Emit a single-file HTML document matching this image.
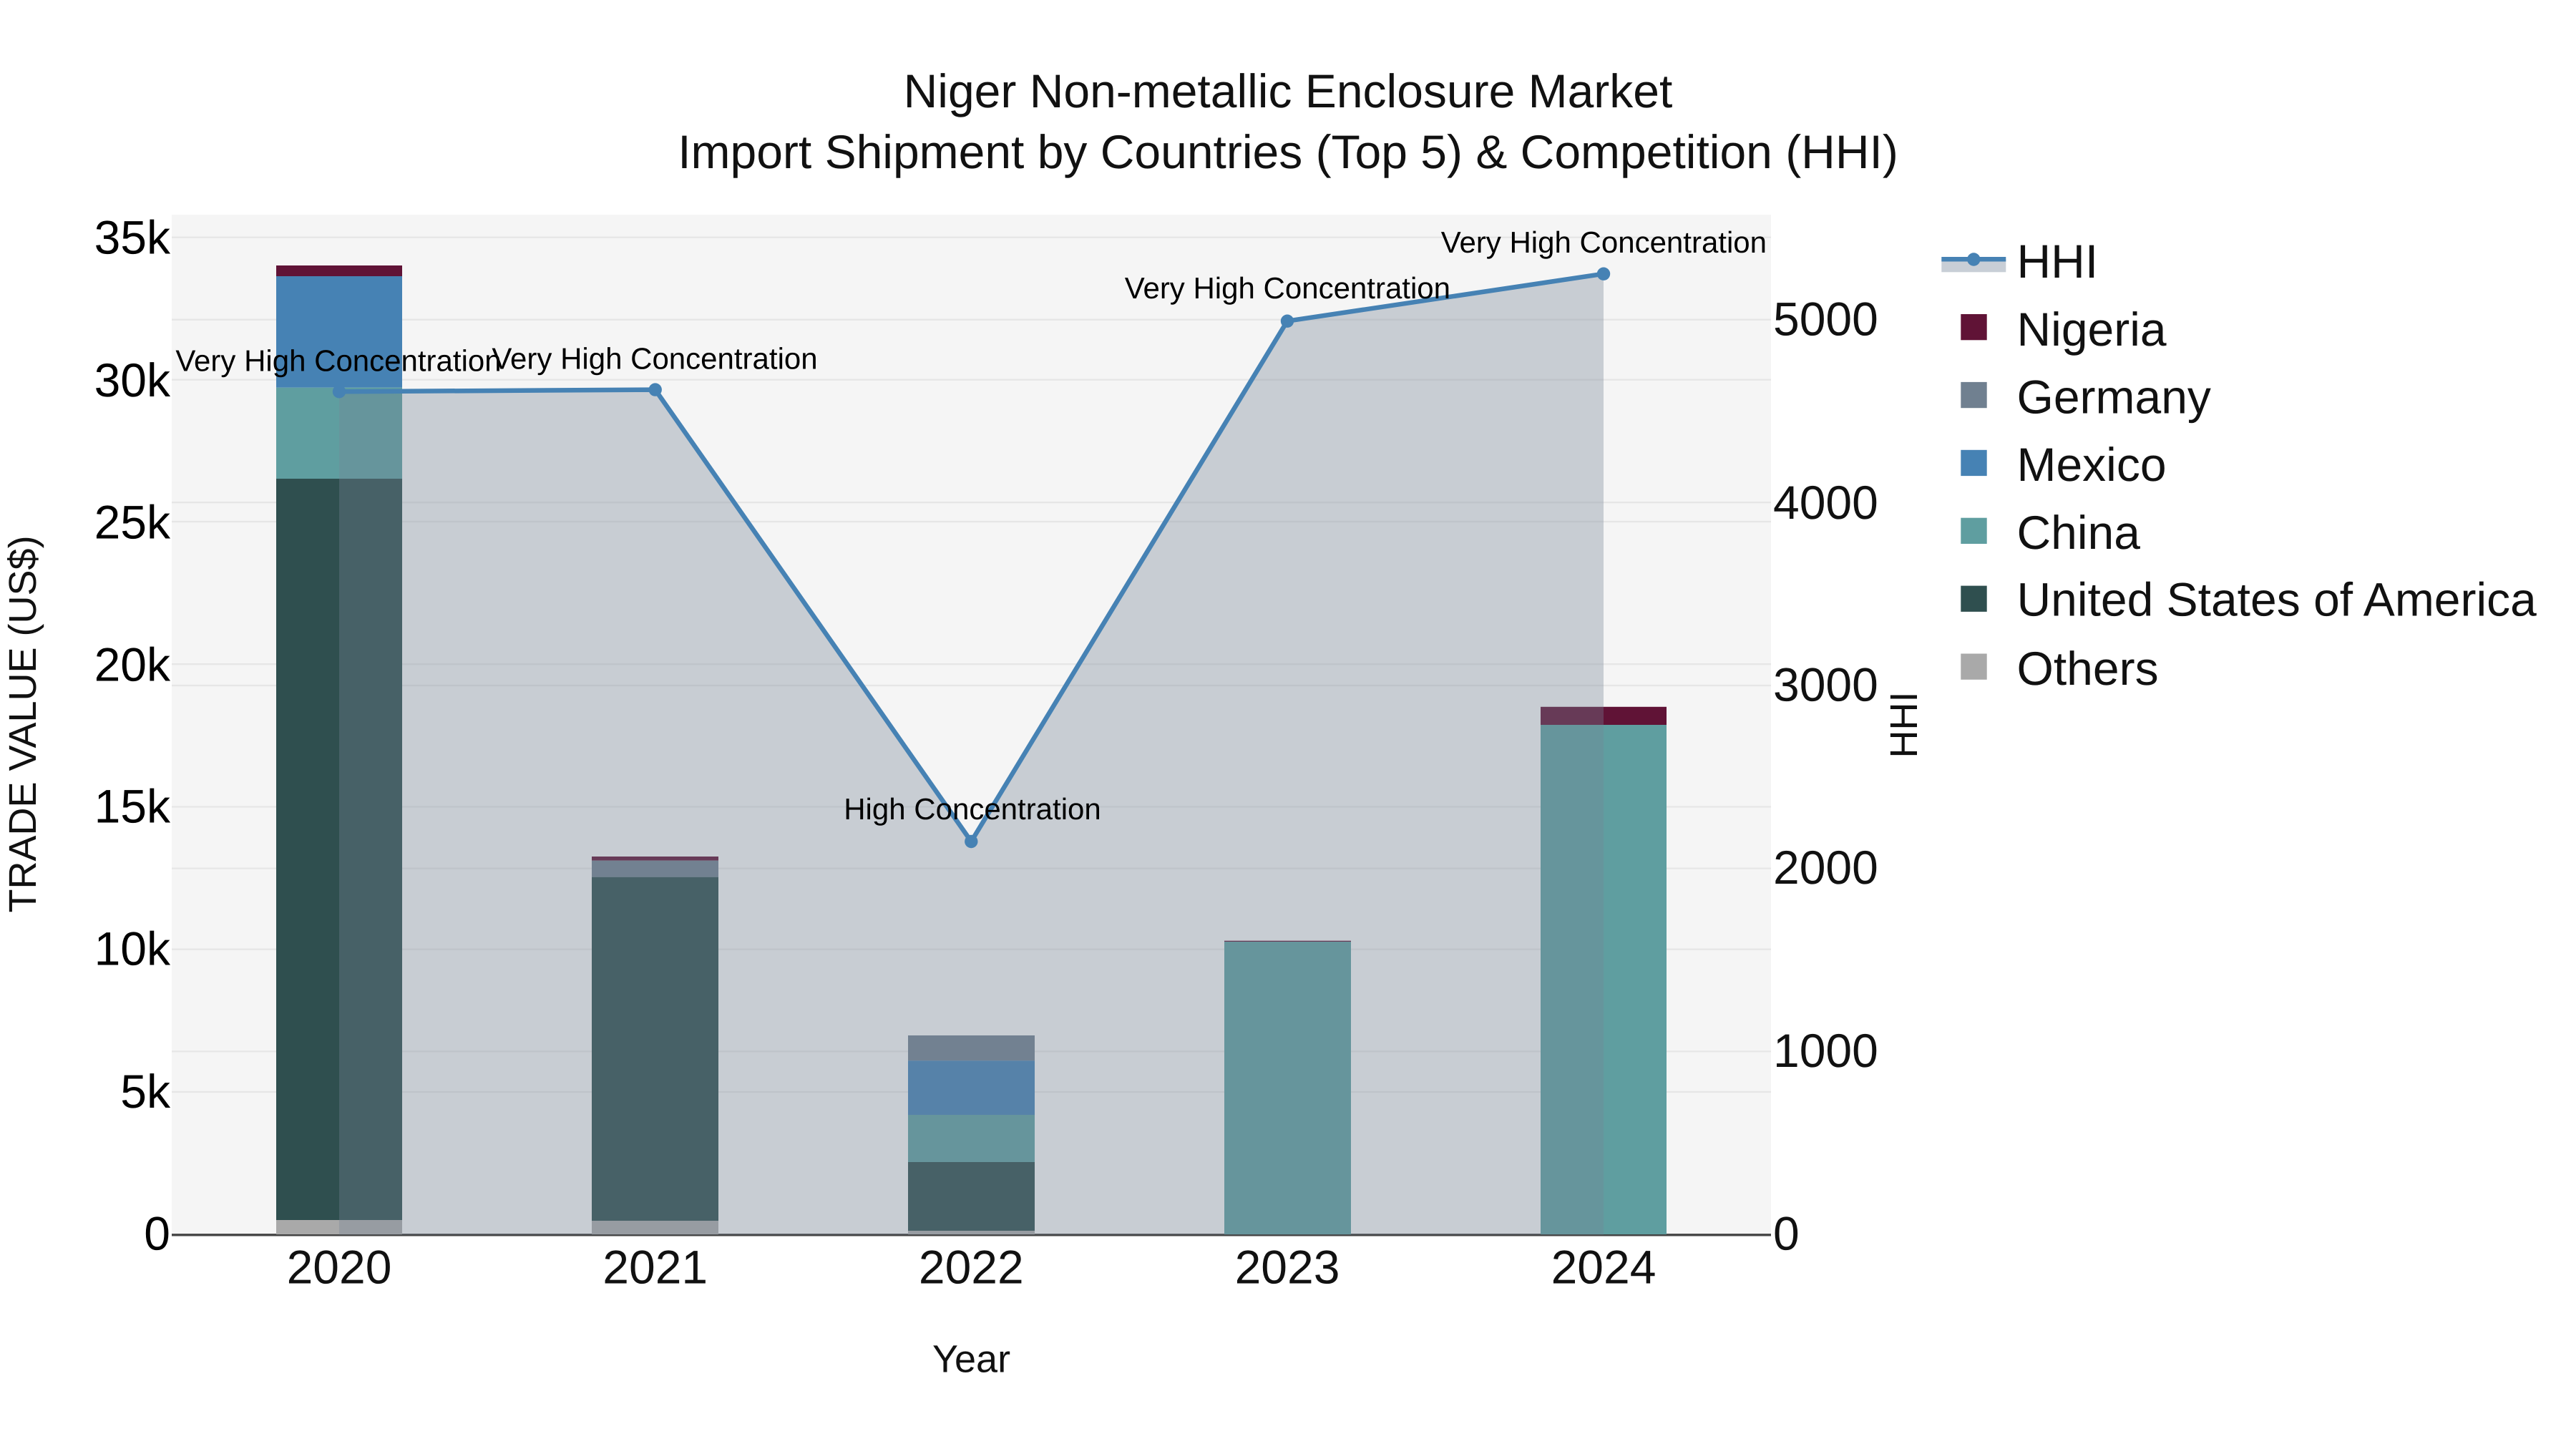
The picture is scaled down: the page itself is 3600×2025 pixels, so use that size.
<!DOCTYPE html>
<html>
<head>
<meta charset="utf-8">
<title>Niger Non-metallic Enclosure Market</title>
<style>
html,body{margin:0;padding:0;background:#fff;}
svg{display:block;}
text{font-family:"Liberation Sans",Arial,sans-serif;text-rendering:geometricPrecision;}
.tl{font-size:66px;fill:#000;text-anchor:end;}
.tr{font-size:66px;fill:#111;text-anchor:start;}
.tx{font-size:66px;fill:#111;text-anchor:middle;}
.an{font-size:42px;fill:#000;text-anchor:middle;}
.lg{font-size:66px;fill:#111;}
.at{font-size:54px;fill:#111;text-anchor:middle;}
.ti{font-size:66px;fill:#111;text-anchor:middle;}
</style>
</head>
<body>
<svg width="3600" height="2025" viewBox="0 0 3600 2025" xmlns="http://www.w3.org/2000/svg">
<rect width="3600" height="2025" fill="#fff"/>
<rect x="240" y="300" width="2235" height="1425.5" fill="#f5f5f5"/>

<g stroke="#e6e6e6" stroke-width="2.3">
<line x1="240" x2="2475" y1="1526" y2="1526"/>
<line x1="240" x2="2475" y1="1326.7" y2="1326.7"/>
<line x1="240" x2="2475" y1="1127.5" y2="1127.5"/>
<line x1="240" x2="2475" y1="928.2" y2="928.2"/>
<line x1="240" x2="2475" y1="729" y2="729"/>
<line x1="240" x2="2475" y1="530.7" y2="530.7"/>
<line x1="240" x2="2475" y1="331.7" y2="331.7"/>
<line x1="240" x2="2475" y1="1469.4" y2="1469.4"/>
<line x1="240" x2="2475" y1="1213.6" y2="1213.6"/>
<line x1="240" x2="2475" y1="958" y2="958"/>
<line x1="240" x2="2475" y1="702.2" y2="702.2"/>
<line x1="240" x2="2475" y1="446.7" y2="446.7"/>
</g>
<line x1="240" x2="2475" y1="1725.8" y2="1725.8" stroke="#444" stroke-width="3.4"/>

<!-- 2020 -->
<rect x="386" y="371" width="176" height="15" fill="#601336"/>
<rect x="386" y="386" width="176" height="155.7" fill="#4682b4"/>
<rect x="386" y="541.7" width="176" height="127.3" fill="#5f9ea0"/>
<rect x="386" y="669" width="176" height="1036" fill="#2f4f4f"/>
<rect x="386" y="1705" width="176" height="20" fill="#a9a9a9"/>
<!-- 2021 -->
<rect x="827" y="1197" width="177" height="5.7" fill="#601336"/>
<rect x="827" y="1202.7" width="177" height="23" fill="#708090"/>
<rect x="827" y="1225.7" width="177" height="480.3" fill="#2f4f4f"/>
<rect x="827" y="1706" width="177" height="19" fill="#a9a9a9"/>
<!-- 2022 -->
<rect x="1269" y="1447" width="177" height="35.3" fill="#708090"/>
<rect x="1269" y="1482.3" width="177" height="75.7" fill="#4682b4"/>
<rect x="1269" y="1558" width="177" height="66" fill="#5f9ea0"/>
<rect x="1269" y="1624" width="177" height="96" fill="#2f4f4f"/>
<rect x="1269" y="1720" width="177" height="5" fill="#a9a9a9"/>
<!-- 2023 -->
<rect x="1711" y="1314.7" width="177" height="1.3" fill="#601336"/>
<rect x="1711" y="1316" width="177" height="409" fill="#5f9ea0"/>
<!-- 2024 -->
<rect x="2153" y="987.8" width="176" height="25.2" fill="#601336"/>
<rect x="2153" y="1013" width="176" height="712" fill="#5f9ea0"/>

<!-- HHI area -->
<polygon points="474,1725.5 474,547.3 915.7,544.6 1357.3,1176 1799,448.7 2241,382.7 2241,1725.5" fill="rgb(118,131,150)" fill-opacity="0.35"/>
<polyline points="474,547.3 915.7,544.6 1357.3,1176 1799,448.7 2241,382.7" fill="none" stroke="#4682b4" stroke-width="6.5" stroke-linejoin="round"/>
<g fill="#4682b4">
<circle cx="474" cy="547.3" r="9.2"/>
<circle cx="915.7" cy="544.6" r="9.2"/>
<circle cx="1357.3" cy="1176" r="9.2"/>
<circle cx="1799" cy="448.7" r="9.2"/>
<circle cx="2241" cy="382.7" r="9.2"/>
</g>

<!-- annotations -->
<text class="an" x="473" y="518.3">Very High Concentration</text>
<text class="an" x="915" y="515.6">Very High Concentration</text>
<text class="an" x="1359" y="1145">High Concentration</text>
<text class="an" x="1799.4" y="417">Very High Concentration</text>
<text class="an" x="2241.4" y="353">Very High Concentration</text>

<!-- left ticks -->
<text class="tl" x="238" y="1746.7">0</text>
<text class="tl" x="238" y="1548">5k</text>
<text class="tl" x="238" y="1348.7">10k</text>
<text class="tl" x="238" y="1149.5">15k</text>
<text class="tl" x="238" y="951.7">20k</text>
<text class="tl" x="238" y="752.5">25k</text>
<text class="tl" x="238" y="554">30k</text>
<text class="tl" x="238" y="354.5">35k</text>

<!-- right ticks -->
<text class="tr" x="2478" y="1746.7">0</text>
<text class="tr" x="2478" y="1491">1000</text>
<text class="tr" x="2478" y="1235.2">2000</text>
<text class="tr" x="2478" y="979.6">3000</text>
<text class="tr" x="2478" y="725">4000</text>
<text class="tr" x="2478" y="468.3">5000</text>

<!-- x ticks -->
<text class="tx" x="474" y="1793.4">2020</text>
<text class="tx" x="915.7" y="1793.4">2021</text>
<text class="tx" x="1357.3" y="1793.4">2022</text>
<text class="tx" x="1799" y="1793.4">2023</text>
<text class="tx" x="2241" y="1793.4">2024</text>

<!-- axis titles -->
<text class="at" x="1357.5" y="1917.5">Year</text>
<text class="at" transform="translate(50,1012) rotate(-90)">TRADE VALUE (US$)</text>
<text class="at" transform="translate(2679,1013) rotate(-90)">HHI</text>

<!-- title -->
<text class="ti" x="1800" y="150">Niger Non-metallic Enclosure Market</text>
<text class="ti" x="1800" y="235">Import Shipment by Countries (Top 5) &amp; Competition (HHI)</text>

<!-- legend -->
<rect x="2713.3" y="362.3" width="90" height="18" fill="#c8ced6"/>
<line x1="2713.3" x2="2803.3" y1="362.3" y2="362.3" stroke="#4682b4" stroke-width="6.5"/>
<circle cx="2758.3" cy="362.5" r="9.2" fill="#4682b4"/>
<text class="lg" x="2818.5" y="387.8">HHI</text>
<rect x="2740.3" y="439" width="36.4" height="36.3" fill="#601336"/>
<text class="lg" x="2818.5" y="483">Nigeria</text>
<rect x="2740.3" y="533.9" width="36.4" height="36.3" fill="#708090"/>
<text class="lg" x="2818.5" y="577.7">Germany</text>
<rect x="2740.3" y="628.8" width="36.4" height="36.3" fill="#4682b4"/>
<text class="lg" x="2818.5" y="672">Mexico</text>
<rect x="2740.3" y="723.7" width="36.4" height="36.3" fill="#5f9ea0"/>
<text class="lg" x="2818.5" y="767">China</text>
<rect x="2740.3" y="818.6" width="36.4" height="36.3" fill="#2f4f4f"/>
<text class="lg" x="2818.5" y="860.5">United States of America</text>
<rect x="2740.3" y="913.5" width="36.4" height="36.3" fill="#a9a9a9"/>
<text class="lg" x="2818.5" y="957">Others</text>
</svg>
</body>
</html>
